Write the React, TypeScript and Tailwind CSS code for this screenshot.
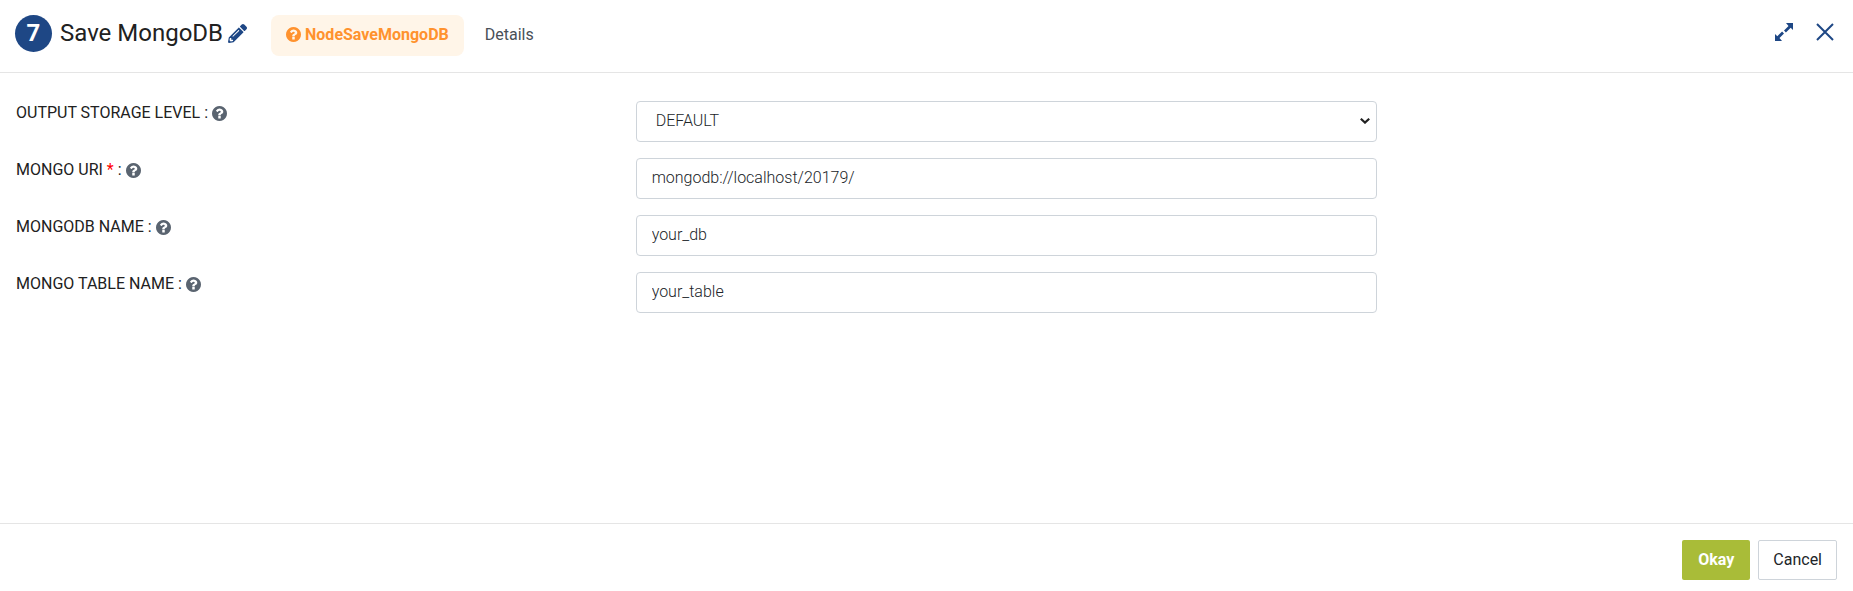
import { useState, type ReactNode } from "react";
import { FaPencilAlt } from "react-icons/fa";

function HelpIcon() {
  return (
    <svg viewBox="128 128 1536 1536" className="size-[15px] shrink-0 fill-current" aria-hidden="true">
      <path d="M1024 1376v-192q0-14-9-23t-23-9h-192q-14 0-23 9t-9 23v192q0 14 9 23t23 9h192q14 0 23-9t9-23zm256-672q0-88-55.5-163t-138.5-116-170-41q-243 0-371 213-15 24 8 42l132 100q7 6 19 6 16 0 25-12 53-68 86-92 34-24 86-24 48 0 85.5 26t37.5 59q0 38-20 61t-68 45q-63 28-115.5 86.5t-52.5 125.5v36q0 14 9 23t23 9h192q14 0 23-9t9-23q0-19 21.5-49.5t54.5-49.5q32-18 49-28.5t46-35 44.5-48 28-60.5 12.5-81zm384 192q0 209-103 385.5t-279.5 279.5-385.5 103-385.5-103-279.5-279.5-103-385.5 103-385.5 279.5-279.5 385.5-103 385.5 103 279.5 279.5 103 385.5z" />
    </svg>
  );
}

function ExpandIcon() {
  return (
    <svg viewBox="0 0 18 18" className="size-[18px] fill-current" aria-hidden="true">
      <path d="M11 0h7v7l-2.300-2.300-4.800 4.800-1.900-1.900 4.500-4.600z" />
      <path d="M7 18H0v-7l2.300 2.300 4.800-4.800 1.900 1.900-4.500 4.600z" />
    </svg>
  );
}

function CloseIcon() {
  return (
    <svg viewBox="0 0 18 18" className="size-[18px] stroke-current" fill="none" strokeWidth="2" aria-hidden="true">
      <path d="M1 1l16 16M17 1L1 17" />
    </svg>
  );
}

function Field({ id, label, required, children }: { id: string; label: string; required?: boolean; children: ReactNode }) {
  return (
    <div className="flex items-start">
      <div className="flex w-1/3 shrink-0 items-center pl-4">
        <label htmlFor={id} className="whitespace-pre text-base leading-6 text-[#212121]">
          {label}
          {required && <span className="text-[#ff0000]"> *</span>} :
        </label>
        <button type="button" aria-label={`Help for ${label}`} className="ml-1 text-[#5a6470]">
          <HelpIcon />
        </button>
      </div>
      <div className="ml-[18px] w-2/5">{children}</div>
    </div>
  );
}

const control =
  "block h-[41px] w-full rounded border border-[#ced4da] bg-white pb-0.5 text-base font-light text-[#212529] outline-none focus:border-[#1e4785]";

export default function App() {
  const [uri, setUri] = useState("mongodb://localhost/20179/");
  const [db, setDb] = useState("your_db");
  const [table, setTable] = useState("your_table");

  return (
    <form
      className="flex min-h-screen flex-col bg-white font-['Roboto',sans-serif]"
      onSubmit={(e) => e.preventDefault()}
    >
      <header className="flex items-start border-b border-[#e5e5e5] px-[15px] pt-[15px] pb-4 text-[#1e4785]">
        <span className="flex size-[37px] items-center justify-center rounded-full bg-[#1e4785] pb-0.5 text-2xl font-bold text-white">
          7
        </span>
        <h1 className="ml-2 text-2xl leading-9 text-[#212121]">Save MongoDB</h1>
        <button type="button" aria-label="Edit name" className="mt-[9px] ml-[5px]">
          <FaPencilAlt className="size-[19px]" />
        </button>
        <nav className="ml-6 flex">
          <button
            type="button"
            className="flex h-[41px] items-center gap-1 rounded-lg bg-[#fff5e8] px-[15px] pb-0.5 text-base font-bold text-[#ff922e]"
          >
            <HelpIcon />
            NodeSaveMongoDB
          </button>
          <button type="button" className="ml-[6px] flex h-[41px] items-center px-[15px] pb-0.5 text-base text-[#495057]">
            Details
          </button>
        </nav>
        <div className="mt-2 mr-1 ml-auto flex gap-[23px]">
          <button type="button" aria-label="Expand">
            <ExpandIcon />
          </button>
          <button type="button" aria-label="Close">
            <CloseIcon />
          </button>
        </div>
      </header>

      <main className="flex flex-1 flex-col gap-4 pt-7 pb-4">
        <Field id="level" label="OUTPUT STORAGE LEVEL">
          <div className="relative">
            <select id="level" className={`${control} appearance-none pr-8 pl-[19px]`}>
              <option>DEFAULT</option>
            </select>
            <svg
              viewBox="0 0 10 6"
              className="pointer-events-none absolute top-[17px] right-[7px] h-1.5 w-2.5 stroke-[#212121]"
              fill="none"
              strokeWidth="2.2"
              aria-hidden="true"
            >
              <path d="M.8.8L5 4.600 9.200.8" />
            </svg>
          </div>
        </Field>
        <Field id="uri" label="MONGO URI" required>
          <input id="uri" className={`${control} px-[15px]`} value={uri} onChange={(e) => setUri(e.target.value)} />
        </Field>
        <Field id="db" label="MONGODB NAME">
          <input id="db" className={`${control} px-[15px]`} value={db} onChange={(e) => setDb(e.target.value)} />
        </Field>
        <Field id="table" label="MONGO TABLE NAME">
          <input id="table" className={`${control} px-[15px]`} value={table} onChange={(e) => setTable(e.target.value)} />
        </Field>
      </main>

      <footer className="flex justify-end gap-2 border-t border-[#e5e5e5] px-4 pt-4 pb-[11px]">
        <button type="submit" className="h-10 rounded-xs bg-[#a9bc38] px-4 text-base font-bold text-white">
          Okay
        </button>
        <button type="button" className="h-10 rounded-xs border border-[#ced4da] bg-white px-[14px] text-base text-[#212529]">
          Cancel
        </button>
      </footer>
    </form>
  );
}
